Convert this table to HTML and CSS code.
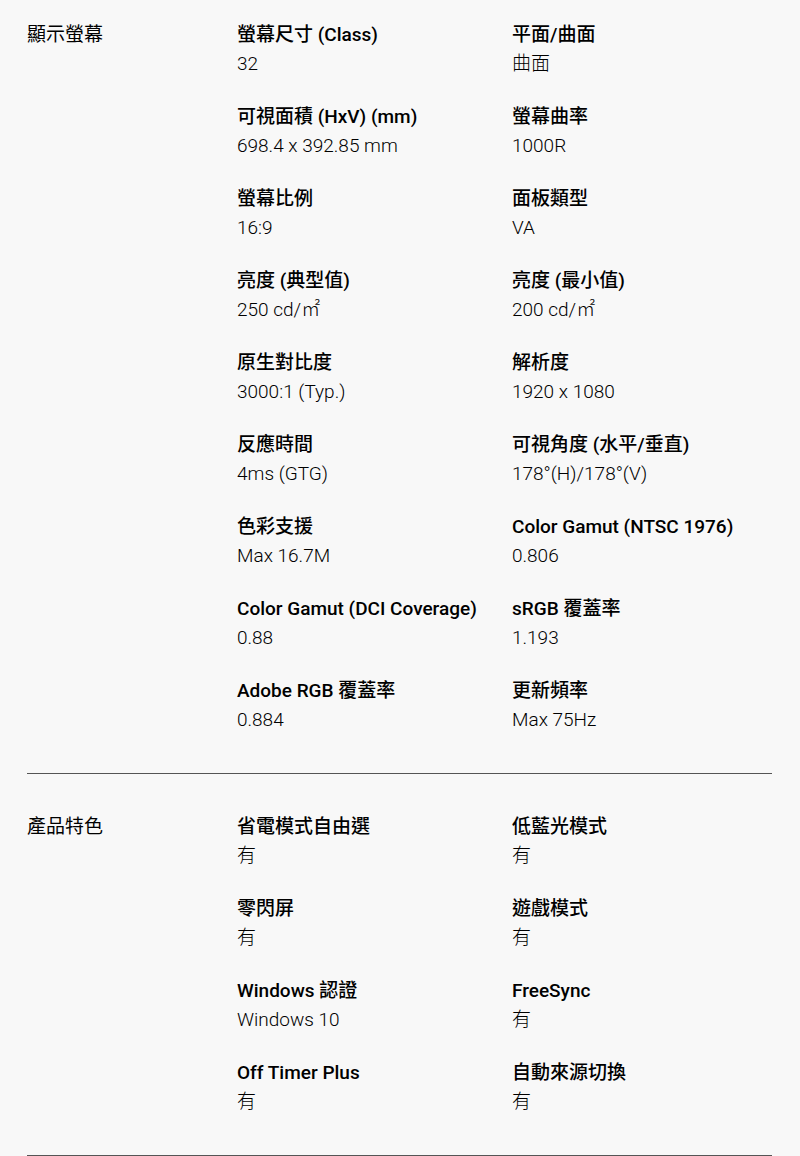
FILE: index.html
```html
<!DOCTYPE html>
<html lang="zh-Hant">
<head>
<meta charset="utf-8">
<link rel="stylesheet" href="styles.css">
</head>
<body>
<div class="page">
  <section class="spec first">
    <h2 class="spec-title">顯示螢幕</h2>
    <div class="items">
      <div class="item"><div class="name">螢幕尺寸 (Class)</div><div class="val">32</div></div>
      <div class="item"><div class="name">平面/曲面</div><div class="val">曲面</div></div>
      <div class="item"><div class="name">可視面積 (HxV) (mm)</div><div class="val">698.4 x 392.85 mm</div></div>
      <div class="item"><div class="name">螢幕曲率</div><div class="val">1000R</div></div>
      <div class="item"><div class="name">螢幕比例</div><div class="val">16:9</div></div>
      <div class="item"><div class="name">面板類型</div><div class="val">VA</div></div>
      <div class="item"><div class="name">亮度 (典型值)</div><div class="val">250 cd/㎡</div></div>
      <div class="item"><div class="name">亮度 (最小值)</div><div class="val">200 cd/㎡</div></div>
      <div class="item"><div class="name">原生對比度</div><div class="val">3000:1 (Typ.)</div></div>
      <div class="item"><div class="name">解析度</div><div class="val">1920 x 1080</div></div>
      <div class="item"><div class="name">反應時間</div><div class="val">4ms (GTG)</div></div>
      <div class="item"><div class="name">可視角度 (水平/垂直)</div><div class="val">178°(H)/178°(V)</div></div>
      <div class="item"><div class="name">色彩支援</div><div class="val">Max 16.7M</div></div>
      <div class="item"><div class="name">Color Gamut (NTSC 1976)</div><div class="val">0.806</div></div>
      <div class="item"><div class="name">Color Gamut (DCI Coverage)</div><div class="val">0.88</div></div>
      <div class="item"><div class="name">sRGB 覆蓋率</div><div class="val">1.193</div></div>
      <div class="item"><div class="name">Adobe RGB 覆蓋率</div><div class="val">0.884</div></div>
      <div class="item"><div class="name">更新頻率</div><div class="val">Max 75Hz</div></div>
    </div>
  </section>
  <section class="spec">
    <h2 class="spec-title">產品特色</h2>
    <div class="items">
      <div class="item"><div class="name">省電模式自由選</div><div class="val">有</div></div>
      <div class="item"><div class="name">低藍光模式</div><div class="val">有</div></div>
      <div class="item"><div class="name">零閃屏</div><div class="val">有</div></div>
      <div class="item"><div class="name">遊戲模式</div><div class="val">有</div></div>
      <div class="item"><div class="name">Windows 認證</div><div class="val">Windows 10</div></div>
      <div class="item"><div class="name">FreeSync</div><div class="val">有</div></div>
      <div class="item"><div class="name">Off Timer Plus</div><div class="val">有</div></div>
      <div class="item"><div class="name">自動來源切換</div><div class="val">有</div></div>
    </div>
  </section>
</div>
</body>
</html>
```
FILE: styles.css
```css
html, body {
  margin: 0;
  padding: 0;
  background: #f8f8f8;
}
body {
  font-family: Roboto, "Noto Sans CJK TC", sans-serif;
  color: #000;
  font-size: 19px;
  line-height: 29px;
}
.page {
  padding: 0 28px 0 27px;
}
.spec {
  display: grid;
  grid-template-columns: 210px 1fr;
  padding: 38px 0 39px;
  border-bottom: 1px solid #555;
}
.spec.first {
  padding-top: 20px;
}
.spec-title {
  margin: 0;
  font-size: 19px;
  font-weight: 400;
  line-height: 29px;
}
.items {
  display: grid;
  grid-template-columns: 275px 1fr;
  row-gap: 24px;
}
.name {
  font-weight: 500;
}
.val {
  font-weight: 300;
  color: #000;
}
```
